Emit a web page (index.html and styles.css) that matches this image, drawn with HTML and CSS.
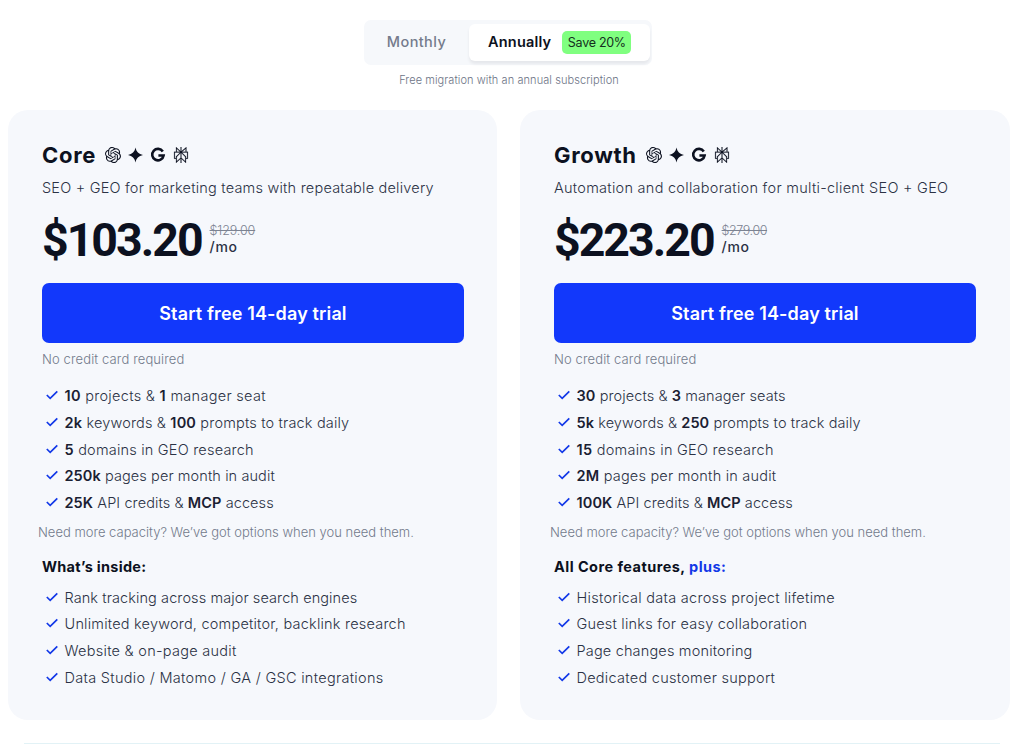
FILE: index.html
```html
<!DOCTYPE html>
<html lang="en">
<head>
<meta charset="utf-8">
<title>Pricing</title>
<link rel="stylesheet" href="styles.css">
</head>
<body>
<svg class="defs" aria-hidden="true">
  <symbol id="openai" viewBox="0 0 24 24"><path d="M22.2819 9.8211a5.9847 5.9847 0 0 0-.5157-4.9108 6.0462 6.0462 0 0 0-6.5098-2.9A6.0651 6.0651 0 0 0 4.9807 4.1818a5.9847 5.9847 0 0 0-3.9977 2.9 6.0462 6.0462 0 0 0 .7427 7.0966 5.98 5.98 0 0 0 .511 4.9107 6.051 6.051 0 0 0 6.5146 2.9001A5.9847 5.9847 0 0 0 13.2599 24a6.0557 6.0557 0 0 0 5.7718-4.2058 5.9894 5.9894 0 0 0 3.9977-2.9001 6.0557 6.0557 0 0 0-.7475-7.0729zm-9.022 12.6081a4.4755 4.4755 0 0 1-2.8764-1.0408l.1419-.0804 4.7783-2.7582a.7948.7948 0 0 0 .3927-.6813v-6.7369l2.02 1.1686a.071.071 0 0 1 .038.052v5.5826a4.504 4.504 0 0 1-4.4945 4.4944zm-9.6607-4.1254a4.4708 4.4708 0 0 1-.5346-3.0137l.142.0852 4.783 2.7582a.7712.7712 0 0 0 .7806 0l5.8428-3.3685v2.3324a.0804.0804 0 0 1-.0332.0615L9.74 19.9502a4.4992 4.4992 0 0 1-6.1408-1.6464zM2.3408 7.8956a4.485 4.485 0 0 1 2.3655-1.9728V11.6a.7664.7664 0 0 0 .3879.6765l5.8144 3.3543-2.0201 1.1685a.0757.0757 0 0 1-.071 0l-4.8303-2.7865A4.504 4.504 0 0 1 2.3408 7.872zm16.5963 3.8558L13.1038 8.364 15.1192 7.2a.0757.0757 0 0 1 .071 0l4.8303 2.7913a4.4944 4.4944 0 0 1-.6765 8.1042v-5.6772a.79.79 0 0 0-.407-.667zm2.0107-3.0231l-.142-.0852-4.7735-2.7818a.7759.7759 0 0 0-.7854 0L9.409 9.2297V6.8974a.0662.0662 0 0 1 .0284-.0615l4.8303-2.7866a4.4992 4.4992 0 0 1 6.6802 4.66zM8.3065 12.863l-2.02-1.1638a.0804.0804 0 0 1-.038-.0567V6.0742a4.4992 4.4992 0 0 1 7.3757-3.4537l-.142.0805L8.704 5.459a.7948.7948 0 0 0-.3927.6813zm1.0976-2.3654l2.602-1.4998 2.6069 1.4998v2.9994l-2.5974 1.4997-2.6067-1.4997Z"/></symbol>
  <symbol id="gemini" viewBox="0 0 24 24"><path d="M12 0C13.500 7 17 10.500 24 12C17 13.500 13.500 17 12 24C10.500 17 7 13.500 0 12C7 10.500 10.500 7 12 0Z"/></symbol>
  <symbol id="google" viewBox="0 0 24 24"><path d="M19.200 6.800A8.600 8.600 0 1 0 20.400 12.800H12.600" fill="none" stroke="currentColor" stroke-width="3.900"/></symbol>
  <symbol id="perplexity" viewBox="0 0 24 24"><path stroke="currentColor" stroke-width=".3" d="M22.3977 7.0896h-2.3106V.0676l-7.5094 6.3542V.1577h-1.1554v6.1966L4.4904 0v7.0896H1.6023v10.3976h2.8882V24l6.932-6.3591v6.2005h1.1554v-6.0469l6.9318 6.1807v-6.4879h2.8882V7.0896zm-3.4657-4.531v4.531h-5.355l5.355-4.531zm-13.2862.0676 4.8691 4.4634H5.6458V2.6262zM2.7576 16.332V8.245h7.8476l-6.1149 6.1147v1.9723H2.7576zm2.8882 5.0404v-3.8852h.0001v-2.6488l5.7763-5.7764v7.0111l-5.7764 5.2993zm12.7086.0248-5.7766-5.1509V9.0618l5.7766 5.7766v6.5588zm2.8882-5.0652h-1.733v-1.9723L13.3948 8.245h7.8478v8.087z"/></symbol>
  <symbol id="check" viewBox="0 0 12 10"><path d="M.8 5L4.200 8.300L11.300 1.300" fill="none" stroke="currentColor" stroke-width="1.700"/></symbol>
</svg>

<header class="billing">
  <div class="tabs">
    <button class="tab">Monthly</button>
    <button class="tab active">Annually <span class="save">Save 20%</span></button>
  </div>
  <p class="migration">Free migration with an annual subscription</p>
</header>

<main class="plans">
  <section class="card">
    <div class="title">
      <h2>Core</h2>
      <div class="engines"><svg><use href="#openai"/></svg><svg class="spark"><use href="#gemini"/></svg><svg><use href="#google"/></svg><svg><use href="#perplexity"/></svg></div>
    </div>
    <p class="desc snug-3">SEO + GEO for marketing teams with repeatable delivery</p>
    <div class="price"><strong>$103.20</strong><div class="per"><s>$129.00</s><span>/mo</span></div></div>
    <button class="cta">Start free 14-day trial</button>
    <p class="note">No credit card required</p>
    <ul class="features">
      <li class="snug-1"><svg><use href="#check"/></svg><span><b>10</b> projects &amp; <b>1</b> manager seat</span></li>
      <li class="snug-4"><svg><use href="#check"/></svg><span><b>2k</b> keywords &amp; <b>100</b> prompts to track daily</span></li>
      <li class="snug-3"><svg><use href="#check"/></svg><span><b>5</b> domains in GEO research</span></li>
      <li class="snug-5"><svg><use href="#check"/></svg><span><b>250k</b> pages per month in audit</span></li>
      <li class="snug-5"><svg><use href="#check"/></svg><span><b>25K</b> API credits &amp; <b>MCP</b> access</span></li>
    </ul>
    <p class="capacity">Need more capacity? We’ve got options when you need them.</p>
    <h3>What’s inside:</h3>
    <ul class="features">
      <li class="snug-5"><svg><use href="#check"/></svg><span>Rank tracking across major search engines</span></li>
      <li class="snug-3"><svg><use href="#check"/></svg><span>Unlimited keyword, competitor, backlink research</span></li>
      <li class="snug-2"><svg><use href="#check"/></svg><span>Website &amp; on-page audit</span></li>
      <li class="snug-1"><svg><use href="#check"/></svg><span>Data Studio / Matomo / GA / GSC integrations</span></li>
    </ul>
  </section>

  <section class="card">
    <div class="title">
      <h2>Growth</h2>
      <div class="engines"><svg><use href="#openai"/></svg><svg class="spark"><use href="#gemini"/></svg><svg><use href="#google"/></svg><svg><use href="#perplexity"/></svg></div>
    </div>
    <p class="desc snug-2">Automation and collaboration for multi-client SEO + GEO</p>
    <div class="price"><strong>$223.20</strong><div class="per"><s class="wide">$279.00</s><span>/mo</span></div></div>
    <button class="cta">Start free 14-day trial</button>
    <p class="note">No credit card required</p>
    <ul class="features">
      <li class="snug-5"><svg><use href="#check"/></svg><span><b>30</b> projects &amp; <b>3</b> manager seats</span></li>
      <li class="snug-5"><svg><use href="#check"/></svg><span><b>5k</b> keywords &amp; <b>250</b> prompts to track daily</span></li>
      <li class="snug-2"><svg><use href="#check"/></svg><span><b>15</b> domains in GEO research</span></li>
      <li class="snug-3"><svg><use href="#check"/></svg><span><b>2M</b> pages per month in audit</span></li>
      <li class="snug-5"><svg><use href="#check"/></svg><span><b>100K</b> API credits &amp; <b>MCP</b> access</span></li>
    </ul>
    <p class="capacity">Need more capacity? We’ve got options when you need them.</p>
    <h3 class="loose">All Core features, <em>plus:</em></h3>
    <ul class="features">
      <li class="snug-2"><svg><use href="#check"/></svg><span>Historical data across project lifetime</span></li>
      <li class="snug-3"><svg><use href="#check"/></svg><span>Guest links for easy collaboration</span></li>
      <li class="snug-4"><svg><use href="#check"/></svg><span>Page changes monitoring</span></li>
      <li class="snug-2"><svg><use href="#check"/></svg><span>Dedicated customer support</span></li>
    </ul>
  </section>
</main>
<hr class="divider">
</body>
</html>
```
FILE: styles.css
```css
* { box-sizing: border-box; margin: 0; padding: 0; }

body {
  height: 744px;
  overflow: hidden;
  background: #fff;
  color: #2b3245;
  font: 350 14.5px/22px Inter, "Liberation Sans", sans-serif;
  white-space: nowrap;
}

button { border: 0; background: none; font: inherit; color: inherit; }
ul { list-style: none; }
.defs { display: none; }
svg { fill: currentColor; }

.billing {
  display: flex;
  flex-direction: column;
  align-items: center;
  height: 110px;
  padding: 20px 8px 0 0;
}
.tabs {
  display: flex;
  width: 288px;
  height: 45px;
  padding: 4px 2px 4px 0;
  border-radius: 7px;
  background: #f6f8fb;
}
.tab {
  width: 105px;
  padding-bottom: 1px;
  color: #747b8c;
  font-size: 14.5px;
  font-weight: 500;
  letter-spacing: .4px;
}
.tab.active {
  display: flex;
  align-items: center;
  width: 181px;
  padding: 0 0 1px 19px;
  border-radius: 6px;
  background: #fff;
  box-shadow: 0 3px 3px #e6e8ec;
  color: #0c1120;
  font-weight: 600;
  letter-spacing: .2px;
}
.save {
  width: 69px;
  height: 23px;
  margin-left: 11px;
  border-radius: 5px;
  background: #80ff80;
  color: #14301e;
  font-size: 12.5px;
  font-weight: 400;
  line-height: 24px;
  letter-spacing: -.28px;
}
.migration {
  height: 22px;
  margin-top: 4px;
  padding-left: 2px;
  color: #6c7385;
  font-size: 11px;
  letter-spacing: .08px;
}

.plans {
  display: grid;
  grid-template-columns: 489px 490px;
  gap: 23px;
  padding-left: 8px;
}
.card {
  height: 610px;
  padding: 30px 34px 0;
  border-radius: 20px;
  background: #f6f8fc;
}
.title {
  display: flex;
  align-items: center;
  gap: 9px;
  height: 30px;
}
h2 {
  color: #0c1120;
  font-size: 22px;
  font-weight: 700;
  letter-spacing: .68px;
}
.engines { display: flex; align-items: center; gap: 7px; color: #0c1120; }
.engines svg { width: 16px; height: 16px; }
.engines .spark { width: 15px; }
.desc { height: 22px; margin-top: 7px; }
.price {
  display: flex;
  align-items: center;
  gap: 8px;
  height: 60px;
  margin-top: 11px;
}
.price strong {
  color: #0c1120;
  font: 700 46.5px/60px Roboto, "Liberation Sans", sans-serif;
  letter-spacing: -2px;
}
.per { display: flex; flex-direction: column; padding-bottom: 2px; line-height: 16px; }
.per s { color: #7c8392; font-size: 12.5px; letter-spacing: -.1px; }
.per .wide { letter-spacing: -.4px; }
.per span { font-size: 14px; font-weight: 500; letter-spacing: .7px; }
.cta {
  display: block;
  width: 422px;
  height: 60px;
  margin-top: 13px;
  padding-top: 2px;
  border-radius: 7px;
  background: #1238fb;
  color: #fff;
  font-size: 18px;
  font-weight: 600;
  letter-spacing: .14px;
}
.note, .capacity { color: #727a8b; font-size: 13px; line-height: 20px; }
.note { margin-top: 6px; letter-spacing: .12px; }
.features { margin-top: 14px; }
.features li { display: flex; align-items: center; height: 26.700px; }
.features svg {
  flex: none;
  width: 12px;
  height: 10px;
  margin: 0 6.500px 2px 4px;
  color: #1238e8;
}
.features b { color: #1a2032; font-weight: 600; }
.capacity { margin: 5.5px 0 0 -4px; }
h3 {
  margin-top: 14.5px;
  color: #0c1120;
  font-size: 14.5px;
  font-weight: 700;
  letter-spacing: .26px;
}
h3 + .features { margin-top: 6px; }
h3 em { color: #1238e8; font-style: normal; }
.loose { letter-spacing: .45px; }

.snug-1 { letter-spacing: .3px; }
.snug-2 { letter-spacing: .27px; }
.snug-3 { letter-spacing: .21px; }
.snug-4 { letter-spacing: .17px; }
.snug-5 { letter-spacing: .09px; }

.divider {
  width: 976px;
  margin: 23px 0 0 24px;
  border: 0;
  border-top: 1px solid #e2f2f6;
}
```
